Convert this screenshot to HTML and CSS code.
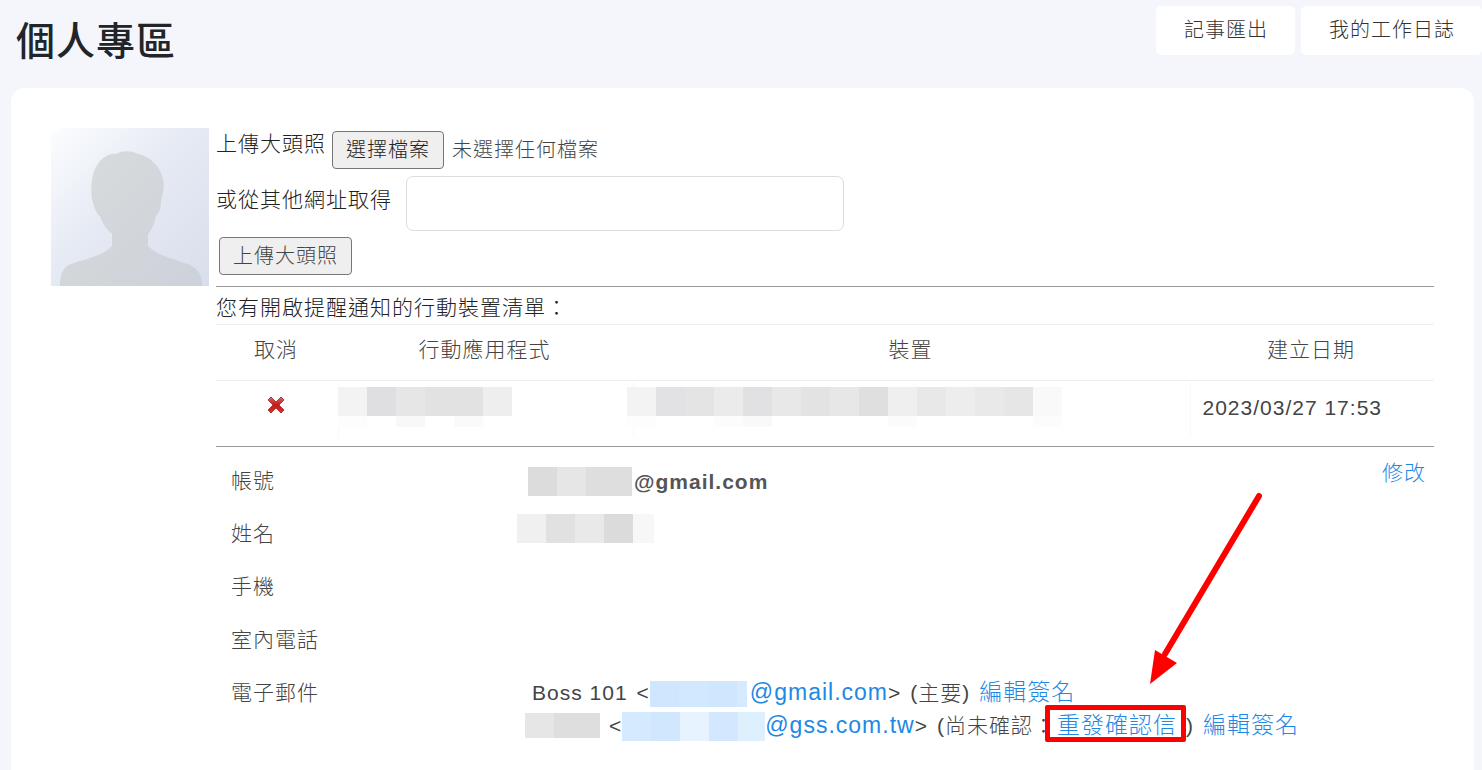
FILE: index.html
```html
<!doctype html>
<html lang="zh-Hant">
<head>
	<meta charset="utf-8">
	<title>個人專區</title>
	<meta name="viewport" content="width=device-width, initial-scale=1">
	<link rel="stylesheet" href="styles.css">
</head>
<body>
	<header class="top-panel">
		<h1>個人專區</h1>
		<nav class="actions">
			<button type="button">記事匯出</button>
			<button type="button">我的工作日誌</button>
		</nav>
	</header>
	<main class="card">
		<svg class="avatar" viewBox="0 0 158 158" role="img" aria-label="大頭照">
			<defs>
				<linearGradient id="sky" x1="0" y1="0" x2="1" y2="1">
					<stop offset="0" stop-color="#fbfdfe"/>
					<stop offset=".45" stop-color="#e6eaf4"/>
					<stop offset="1" stop-color="#d9deec"/>
				</linearGradient>
				<linearGradient id="body" x1="0" y1="0" x2="1" y2="1">
					<stop offset="0" stop-color="#d8dcdc"/>
					<stop offset="1" stop-color="#cdd1da"/>
				</linearGradient>
			</defs>
			<path fill="url(#sky)" d="M10 0H158V158H0V7Z"/>
			<path fill="url(#body)" d="M9 158C9 146 12 139 20 136C35 131 52 128 61 118V106C54 100 51 94 49 88C45 86 44 80 42 75C39 65 40 48 45 39C50 30 58 25 65 26C73 22 81 23 87 26C98 28 108 37 111 48C115 59 111 67 110 74C110 82 107 86 105 88C103 96 101 102 97 106V118C107 128 123 131 139 137C148 141 151 148 151 158Z"/>
		</svg>
		<div class="content">
			<form class="upload">
				<div class="file-row">
					<label for="photo">上傳大頭照</label>
					<div class="picker">
						<input type="file" id="photo">
						<label for="photo" class="btn">選擇檔案</label>
						<span>未選擇任何檔案</span>
					</div>
				</div>
				<div class="url-row">
					<label for="photo-url">或從其他網址取得</label>
					<input type="text" id="photo-url">
				</div>
				<button type="button" class="btn submit">上傳大頭照</button>
			</form>
			<section class="devices">
				<div class="caption">您有開啟提醒通知的行動裝置清單：</div>
				<table>
					<thead>
						<tr><th class="cancel">取消</th><th class="app">行動應用程式</th><th>裝置</th><th class="date">建立日期</th></tr>
					</thead>
					<tbody>
						<tr>
							<td>
								<button type="button" class="remove" aria-label="取消">
									<svg width="18" height="18" viewBox="0 0 18 18">
										<defs><linearGradient id="red" x1="0" y1="0" x2="0" y2="1"><stop offset="0" stop-color="#d56a68"/><stop offset=".5" stop-color="#c41a1a"/><stop offset="1" stop-color="#d83232"/></linearGradient></defs>
										<path fill="url(#red)" stroke="#b23a3a" stroke-linejoin="round" d="M4 1L9 6L14 1L17 4L12 9L17 14L14 17L9 12L4 17L1 14L6 9L1 4Z"/>
									</svg>
								</button>
							</td>
							<td>
								<svg class="mosaic" width="174" height="40">
									<rect width="29" height="29" fill="#f3f3f3"/>
									<rect x="29" width="29" height="29" fill="#dfdfe2"/>
									<rect x="58" width="29" height="29" fill="#e6e6e6"/>
									<rect x="87" width="58" height="29" fill="#e2e2e2"/>
									<rect x="145" width="29" height="29" fill="#eee"/>
									<rect y="29" width="29" height="11" fill="#fdfdfd"/>
									<rect x="58" y="29" width="29" height="11" fill="#f8f8f8"/>
									<rect x="116" y="29" width="29" height="11" fill="#fafafa"/>
								</svg>
							</td>
							<td>
								<svg class="mosaic wide" width="435" height="40">
									<rect width="29" height="29" fill="#f3f3f3"/>
									<rect x="29" width="29" height="29" fill="#e2e2e5"/>
									<rect x="58" width="29" height="29" fill="#e4e4e4"/>
									<rect x="87" width="29" height="29" fill="#ebebeb"/>
									<rect x="116" width="29" height="29" fill="#e1e1e4"/>
									<rect x="145" width="29" height="29" fill="#e8e8e8"/>
									<rect x="174" width="29" height="29" fill="#e3e3e3"/>
									<rect x="203" width="29" height="29" fill="#e7e7e7"/>
									<rect x="232" width="29" height="29" fill="#dfdfdf"/>
									<rect x="261" width="29" height="29" fill="#efefef"/>
									<rect x="290" width="29" height="29" fill="#e8e8e8"/>
									<rect x="319" width="29" height="29" fill="#ededed"/>
									<rect x="348" width="29" height="29" fill="#e9e9e9"/>
									<rect x="377" width="29" height="29" fill="#e6e6e6"/>
									<rect x="406" width="29" height="29" fill="#f9f9f9"/>
									<rect y="29" width="29" height="11" fill="#fdfdfd"/>
									<rect x="87" y="29" width="29" height="11" fill="#fcfcfc"/>
									<rect x="116" y="29" width="29" height="11" fill="#f9f9f9"/>
									<rect x="261" y="29" width="29" height="11" fill="#fbfbfb"/>
									<rect x="406" y="29" width="29" height="11" fill="#fcfcfc"/>
								</svg>
							</td>
							<td class="time">2023/03/27 17:53</td>
						</tr>
					</tbody>
				</table>
			</section>
			<section class="profile">
				<dl>
					<dt>帳號</dt>
					<dd>
						<svg class="hidden-text" width="101" height="29">
							<path fill="#dcdcdc" d="M-4 0h29v29h-29z"/><path fill="#e6e6e6" d="M25 0h29v29H25z"/><path fill="#dedede" d="M54 0h46v29H54z"/>
						</svg>
						<strong>@gmail.com</strong>
					</dd>
					<dt>姓名</dt>
					<dd class="name">
						<svg class="hidden-text" width="122" height="29">
							<path fill="#f0f0f0" d="M-15 0h29v29h-29z"/><path fill="#e1e1e1" d="M14 0h29v29H14z"/><path fill="#e9e9e9" d="M43 0h29v29H43z"/><path fill="#dbdbdb" d="M72 0h29v29H72z"/><path fill="#f7f7f7" d="M101 0h21v29h-21z"/>
						</svg>
					</dd>
					<dt>手機</dt>
					<dd></dd>
					<dt>室內電話</dt>
					<dd></dd>
					<dt>電子郵件</dt>
					<dd class="mails">
						<div>
							<span>Boss 101</span>
							<span class="address">&lt;<a href="#"><svg class="hidden-text" width="100" height="26"><path fill="#cfe6fe" d="M0 0h29v26H0z"/><path fill="#d2e8fe" d="M29 0h29v26H29z"/><path fill="#cee6fe" d="M58 0h29v26H58z"/><path fill="#d6eafe" d="M87 0h10v26H87z"/></svg>@gmail.com</a>&gt;</span>
							<span>(主要)</span>
							<a href="#">編輯簽名</a>
						</div>
						<div>
							<svg class="hidden-text" width="68" height="25"><path fill="#e6e6e6" d="M-7 0h29v25h-29z"/><path fill="#dedede" d="M22 0h46v25H22z"/></svg>
							<span class="address">&lt;<a href="#"><svg class="hidden-text" width="143" height="29"><path fill="#d5eaff" d="M0 0h29v29H0z"/><path fill="#d0e7fe" d="M29 0h29v29H29z"/><path fill="#e7f3ff" d="M58 0h29v29H58z"/><path fill="#d3e8fe" d="M87 0h29v29H87z"/><path fill="#deeffe" d="M116 0h27v29h-27z"/></svg>@gss.com.tw</a>&gt;</span>
							<span>(尚未確認：<span class="marked"><a href="#">重發確認信</a><svg class="arrow" width="120" height="200"><path stroke="red" stroke-width="6" stroke-linecap="round" d="M114 8L20 166"/><path fill="red" d="M5 196L10 162L32 175Z"/></svg></span>)</span>
							<a href="#">編輯簽名</a>
						</div>
					</dd>
				</dl>
				<a href="#" class="edit">修改</a>
			</section>
		</div>
	</main>
</body>
</html>
```
FILE: styles.css
```css
* {
	box-sizing: border-box;
}
body {
	background: #f5f6fb;
	color: #444;
	display: flex;
	flex-direction: column;
	font-family: 'Liberation Sans', 'Noto Sans CJK TC', sans-serif;
	font-size: 21px;
	font-weight: 300;
	letter-spacing: 1px;
	line-height: 32px;
	margin: 0;
	min-height: 100vh;
}
button, input {
	font: inherit;
	letter-spacing: inherit;
}
strong {
	color: #555;
	font-weight: 700;
}
a {
	color: #1e88e5;
	font-size: 23px;
	text-decoration: none;
}

.top-panel {
	display: flex;
	justify-content: space-between;
	align-items: flex-start;
	height: 88px;
	padding: 6px 0 0 16px;
}
h1 {
	color: #212529;
	font-size: 39px;
	font-weight: 500;
	line-height: 72px;
	margin: 0;
}
.actions {
	display: flex;
	gap: 6px;
}
.actions button {
	background: white;
	border: none;
	border-radius: 5px;
	color: #333;
	font-size: 20px;
	height: 49px;
	padding: 0 27px 2px 28px;
}

.card {
	background: white;
	border-radius: 14px 14px 0 0;
	display: flex;
	flex: 1;
	gap: 7px;
	margin: 0 8px 0 11px;
	padding: 40px 40px 0;
}
.avatar {
	flex: none;
	height: 158px;
	width: 158px;
}
.content {
	flex: 1;
}

.upload {
	color: #222;
	height: 158px;
}
.file-row {
	display: flex;
	gap: 6px;
	height: 48px;
}
.picker {
	align-items: center;
	display: flex;
	gap: 8px;
	height: 44px;
}
.picker input {
	opacity: 0;
	position: absolute;
	width: 1px;
}
.btn {
	background: #efefef;
	border: 1px solid #767676;
	border-radius: 4px;
	color: #222;
	font-size: 20px;
	height: 38px;
	line-height: 36px;
	padding: 0 13px;
}
.picker span {
	color: #444;
	font-size: 20px;
}
.url-row {
	align-items: center;
	display: flex;
	gap: 14px;
}
.url-row label {
	padding-bottom: 8px;
}
.url-row input {
	background: white;
	border: 1px solid #ddd;
	border-radius: 7px;
	height: 55px;
	padding: 0 12px;
	width: 438px;
}
.submit {
	color: #444;
	margin: 6px 3px;
}

.devices {
	border-bottom: 1px solid #999;
	border-top: 1px solid #999;
	height: 161px;
}
.caption {
	color: #222;
	height: 37px;
	line-height: 42px;
}
table {
	border-collapse: collapse;
	table-layout: fixed;
	width: 100%;
}
tr {
	border-top: 1px solid #eee;
	height: 56px;
}
th {
	font-weight: 300;
	padding: 0 2px 6px 0;
}
td {
	padding: 0 0 2px;
	position: relative;
	text-align: center;
}
td + td {
	border-left: 1px solid #f8f8f8;
}
.cancel {
	width: 122px;
}
.app {
	width: 295px;
}
.date {
	width: 244px;
}
.time {
	padding-left: 12px;
	text-align: left;
}
.remove {
	background: none;
	border: none;
	line-height: 0;
	padding: 0 2px 10px 0;
}
.mosaic {
	left: -1px;
	position: absolute;
	top: 6px;
}
.mosaic.wide {
	left: -7px;
}

.profile {
	display: flex;
	padding-top: 8px;
}
dl {
	display: grid;
	flex: 1;
	grid-template-columns: 301px 1fr;
	margin: 0;
	padding-left: 15px;
}
dt, dd {
	height: 53px;
	line-height: 52px;
	margin: 0;
}
dd {
	align-items: center;
	display: flex;
	gap: 1px;
}
dd.name {
	padding-bottom: 12px;
}
dd.mails {
	align-items: stretch;
	flex-direction: column;
	gap: 0;
	height: auto;
	padding-top: 9px;
}
.mails div {
	align-items: center;
	display: flex;
	gap: 9px;
	height: 33px;
	line-height: 33px;
	white-space: nowrap;
}
.hidden-text {
	flex: none;
	overflow: visible;
	vertical-align: middle;
}
.edit {
	font-size: 21px;
	line-height: 36px;
	padding-right: 8px;
}

/* red frame and arrow around the resend link */
.marked {
	margin: 0 9px 0 2px;
	position: relative;
}
.marked::after {
	border: 5px solid red;
	border-radius: 2px;
	content: '';
	inset: -9px -9px -5px -12px;
	pointer-events: none;
	position: absolute;
}
.arrow {
	bottom: 49px;
	left: 88px;
	pointer-events: none;
	position: absolute;
}
```
